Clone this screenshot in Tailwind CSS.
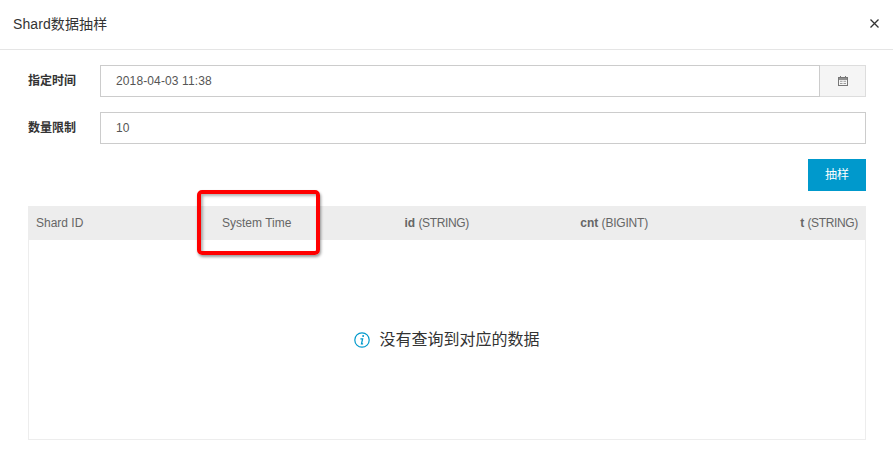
<!DOCTYPE html>
<html lang="zh">
<head>
  <meta charset="UTF-8" />
  <title>Shard数据抽样</title>
  <script src="https://cdn.jsdelivr.net/npm/@tailwindcss/browser@4"></script>
</head>
<body class="relative bg-white text-[#333] h-[455px] overflow-hidden font-['Liberation_Sans','Noto_Sans_CJK_SC',sans-serif] text-xs">

  <!-- header -->
  <div class="h-[50px] border-b border-[#e5e5e5] flex items-center justify-between pl-[13px] pr-[14px] pb-[2px]">
    <h1 class="text-sm text-[#333] tracking-[0.1px]">Shard数据抽样</h1>
    <svg class="w-[9px] h-[9px] text-[#333]" viewBox="0 0 9 9" fill="none" stroke="currentColor" stroke-width="1.3">
      <path d="M.5.5l8 8M8.5.5l-8 8"/>
    </svg>
  </div>

  <div class="pr-[27px] pl-[28px] pt-[15px]">
    <!-- form -->
    <div class="flex items-center h-8">
      <label class="w-[72px] font-semibold text-[#333]">指定时间</label>
      <div class="flex-1 flex h-8">
        <div class="flex-1 pl-[15px] flex items-center text-[#555] tracking-[0.12px] border border-[#ccc]">2018-04-03 11:38</div>
        <div class="w-[46px] flex items-center justify-center bg-[#f5f5f5] border-y border-r border-[#ddd]">
          <svg class="w-[10px] h-[10px] text-[#777]" viewBox="0 0 10 10" fill="none" stroke="currentColor">
            <path d="M2.5 0v2M7.5 0v2" stroke-width="1"/>
            <rect x=".5" y="1.5" width="9" height="8" stroke-width="1"/>
            <path d="M.5 3h9" stroke-width="1.6"/>
            <path d="M2 5.3h2.5M5.5 5.3H8M2 7.5h2.5M5.5 7.5H8" stroke-width="1" opacity=".7"/>
          </svg>
        </div>
      </div>
    </div>
    <div class="flex items-center h-8 mt-[15px]">
      <label class="w-[72px] font-semibold text-[#333]">数量限制</label>
      <div class="flex-1 h-8 border border-[#ccc] pl-[15px] flex items-center text-[#555]">10</div>
    </div>
    <div class="flex justify-end mt-[15px]">
      <button class="w-[58px] h-8 bg-[#0099cc] text-white">抽样</button>
    </div>

    <!-- table -->
    <div class="mt-[15px]">
      <div class="grid grid-cols-[186px_100px_163px_179px_210px] h-[34px] items-center bg-[#ededed] text-[#666]">
        <div class="px-2">Shard ID</div>
        <div class="px-2">System Time</div>
        <div class="px-2 text-right"><b>id</b> <span class="tracking-[-0.35px]">(STRING)</span></div>
        <div class="px-2 text-right"><b>cnt</b> <span class="tracking-[-0.2px]">(BIGINT)</span></div>
        <div class="px-2 text-right"><b>t</b> <span class="tracking-[-0.35px]">(STRING)</span></div>
      </div>
      <div class="h-[200px] border border-t-0 border-[#ededed] flex items-center justify-center gap-[9px]">
        <svg class="w-4 h-4 text-[#0099cc]" viewBox="0 0 16 16" fill="none" stroke="currentColor">
          <circle cx="8" cy="8" r="7.2" stroke-width="1.2"/>
          <path d="M9.3 3.2l-.3 1.6" stroke-width="1.7"/>
          <path d="M6.4 6.9h2.2l-1.1 5h1.6" stroke-width="1.3"/>
        </svg>
        <span class="text-base text-[#333]">没有查询到对应的数据</span>
      </div>
    </div>
  </div>

  <!-- red highlight drawn over the screenshot -->
  <div class="absolute left-[197px] top-[190px] w-[123px] h-[65px] border-[4px] border-[#f00] rounded-[5px] shadow-[1px_2px_3px_rgba(0,0,0,0.4),inset_2px_2px_3px_rgba(0,0,0,0.3)]"></div>

</body>
</html>
